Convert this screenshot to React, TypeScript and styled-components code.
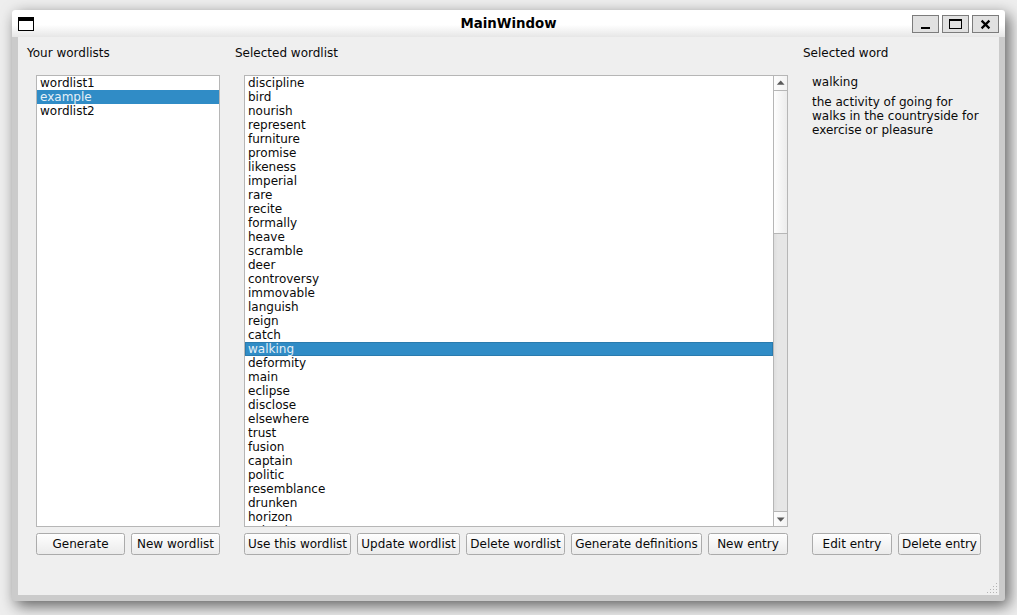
import React from "react";
import styled, { createGlobalStyle, css } from "styled-components";

const GlobalStyle = createGlobalStyle`
  * { box-sizing: border-box; }
  html, body { margin: 0; padding: 0; }
  body {
    width: 1017px;
    height: 615px;
    overflow: hidden;
    background: #eeeeee;
    font: 12px/14px "DejaVu Sans", sans-serif;
    color: #0a0a0a;
  }
`;

const Desktop = styled.div`
  width: 1017px;
  height: 615px;
  padding: 10px 12px 14px;
  overflow: hidden;
  background: #eeeeee;
`;

const Window = styled.div`
  width: 993px;
  height: 591px;
  display: flex;
  flex-direction: column;
  background: #cbcbcb;
  border-radius: 3px;
  box-shadow: 4px 5px 15px rgba(0, 0, 0, 0.6);
`;

const TitleBar = styled.header`
  height: 27px;
  flex: none;
  display: flex;
  align-items: center;
  padding: 1px 6px 0;
  border-radius: 3px 3px 0 0;
  background: linear-gradient(#ffffff 0%, #ffffff 55%, #e6e6e6 100%);
`;

const TitleSide = styled.div<{ $end?: boolean }>`
  width: 87px;
  display: flex;
  gap: 3px;
  justify-content: ${(p) => (p.$end ? "flex-end" : "flex-start")};
`;

const Title = styled.h1`
  flex: 1;
  margin: 0;
  text-align: center;
  font-size: 13.33px;
  line-height: 16px;
  font-weight: bold;
  color: #000;
`;

const CaptionButton = styled.button`
  width: 27px;
  height: 18px;
  padding: 0;
  border: 1px solid #7c7c7c;
  background: #e1e1e1;
  display: flex;
`;

const Glyph = styled.svg`
  display: block;
  flex: none;
`;

const Body = styled.main`
  flex: 1;
  margin: 0 6px 6px;
  padding: 9px 9px 0;
  background: #efefef;
  display: flex;
  flex-direction: column;
`;

const Columns = styled.div`
  display: grid;
  grid-template-columns: 202px 562px 187px;
  column-gap: 6px;
`;

const Panel = styled.section`
  display: flex;
  flex-direction: column;
`;

const PanelTitle = styled.h2`
  margin: 0 0 15px;
  font-size: 12px;
  line-height: 14px;
  font-weight: normal;
`;

const PanelBody = styled.div`
  height: 480px;
  margin: 0 9px;
  display: flex;
  flex-direction: column;
  gap: 6px;
`;

const ListBox = styled.div`
  height: 452px;
  flex: none;
  display: flex;
  border: 1px solid #b6b6b6;
  background: #fff;
  overflow: hidden;
`;

const Rows = styled.ul`
  flex: 1;
  margin: 0;
  padding: 0;
  list-style: none;
  overflow: hidden;
`;

const Row = styled.li<{ $selected?: boolean; $focused?: boolean }>`
  height: 14px;
  padding-left: 3px;
  white-space: nowrap;
  ${(p) =>
    p.$selected &&
    css`
      background: #308cc6;
      color: #e6f0f7;
    `}
  ${(p) =>
    p.$focused &&
    css`
      box-shadow: inset 0 0 0 1px #2a7bae;
    `}
`;

const ScrollBar = styled.div`
  width: 14px;
  flex: none;
  display: flex;
  flex-direction: column;
  border-left: 1px solid #b6b6b6;
  background: linear-gradient(90deg, #dedede, #e6e6e6 30%, #e6e6e6);
`;

const ScrollArrow = styled.div<{ $down?: boolean }>`
  height: 15px;
  flex: none;
  background: linear-gradient(90deg, #fdfdfd, #f3f3f3);
  border: 0 solid #b6b6b6;
  border-width: ${(p) => (p.$down ? "1px 0 0" : "0 0 1px")};
`;

const ScrollThumb = styled.div`
  height: 143px;
  flex: none;
  border-bottom: 1px solid #b6b6b6;
  background: linear-gradient(90deg, #fefefe, #ececec);
`;

const Track = styled.div`
  flex: 1;
`;

const ButtonRow = styled.div`
  display: flex;
  gap: 6px;
  margin-top: auto;
`;

const PushButton = styled.button<{ $w: number }>`
  width: ${(p) => p.$w}px;
  height: 22px;
  flex: none;
  padding: 0;
  border: 1px solid #ababab;
  border-radius: 2.5px;
  background: linear-gradient(#fefefe, #ebebeb);
  font: 12px/14px "DejaVu Sans", sans-serif;
  color: #0a0a0a;
  white-space: nowrap;
`;

const Word = styled.p`
  margin: 0 0 6px;
`;

const Definition = styled.p`
  margin: 0;
  white-space: pre-line;
`;

const GripLine = styled.div`
  margin: auto -8px 1px 0;
  display: flex;
  justify-content: flex-end;
`;

const wordlists = ["wordlist1", "example", "wordlist2"];

const words = [
  "discipline", "bird", "nourish", "represent", "furniture", "promise",
  "likeness", "imperial", "rare", "recite", "formally", "heave", "scramble",
  "deer", "controversy", "immovable", "languish", "reign", "catch", "walking",
  "deformity", "main", "eclipse", "disclose", "elsewhere", "trust", "fusion",
  "captain", "politic", "resemblance", "drunken", "horizon", "splendor",
];

const WindowIcon = () => (
  <Glyph width="16" height="14" shapeRendering="crispEdges">
    <rect width="16" height="14" fill="#000" />
    <rect x="1" y="4" width="14" height="9" fill="#fff" />
  </Glyph>
);

const MinimizeGlyph = () => (
  <Glyph width="25" height="16" shapeRendering="crispEdges">
    <rect x="8" y="11" width="9" height="2" />
  </Glyph>
);

const MaximizeGlyph = () => (
  <Glyph width="25" height="16" shapeRendering="crispEdges">
    <path fillRule="evenodd" d="M6 3h13v10H6zM7 5v7h11V5z" />
  </Glyph>
);

const CloseGlyph = () => (
  <Glyph width="25" height="16">
    <path d="M8.6 4.6l7.8 7.8M16.4 4.6l-7.8 7.8" stroke="#000" strokeWidth="2.2" />
  </Glyph>
);

const Arrow = ({ down }: { down?: boolean }) => (
  <Glyph width="13" height="14">
    <path d={down ? "M2.8 5.5h7.8l-3.9 4.3z" : "M2.8 8.8h7.8l-3.9-4.3z"} fill="#5a5a5a" />
  </Glyph>
);

const SizeGrip = () => (
  <Glyph width="11" height="11" shapeRendering="crispEdges" fill="#b4b4b4">
    {[0, 1, 2, 3].flatMap((r) =>
      Array.from({ length: r + 1 }, (_, i) => (
        <rect key={`${r}-${i}`} x={9 - i * 3} y={r * 3} width="1" height="1" />
      ))
    )}
  </Glyph>
);

export default function App() {
  return (
    <>
      <GlobalStyle />
      <Desktop>
        <Window>
          <TitleBar>
            <TitleSide><WindowIcon /></TitleSide>
            <Title>MainWindow</Title>
            <TitleSide $end>
              <CaptionButton aria-label="Minimize"><MinimizeGlyph /></CaptionButton>
              <CaptionButton aria-label="Maximize"><MaximizeGlyph /></CaptionButton>
              <CaptionButton aria-label="Close"><CloseGlyph /></CaptionButton>
            </TitleSide>
          </TitleBar>
          <Body>
            <Columns>
              <Panel>
                <PanelTitle>Your wordlists</PanelTitle>
                <PanelBody>
                  <ListBox>
                    <Rows>
                      {wordlists.map((w) => (
                        <Row key={w} $selected={w === "example"}>{w}</Row>
                      ))}
                    </Rows>
                  </ListBox>
                  <ButtonRow>
                    <PushButton $w={89}>Generate</PushButton>
                    <PushButton $w={89}>New wordlist</PushButton>
                  </ButtonRow>
                </PanelBody>
              </Panel>
              <Panel>
                <PanelTitle>Selected wordlist</PanelTitle>
                <PanelBody>
                  <ListBox>
                    <Rows>
                      {words.map((w) => (
                        <Row key={w} $selected={w === "walking"} $focused={w === "walking"}>{w}</Row>
                      ))}
                    </Rows>
                    <ScrollBar>
                      <ScrollArrow><Arrow /></ScrollArrow>
                      <ScrollThumb />
                      <Track />
                      <ScrollArrow $down><Arrow down /></ScrollArrow>
                    </ScrollBar>
                  </ListBox>
                  <ButtonRow>
                    <PushButton $w={107}>Use this wordlist</PushButton>
                    <PushButton $w={103}>Update wordlist</PushButton>
                    <PushButton $w={99}>Delete wordlist</PushButton>
                    <PushButton $w={131}>Generate definitions</PushButton>
                    <PushButton $w={80}>New entry</PushButton>
                  </ButtonRow>
                </PanelBody>
              </Panel>
              <Panel>
                <PanelTitle>Selected word</PanelTitle>
                <PanelBody>
                  <div>
                    <Word>walking</Word>
                    <Definition>{"the activity of going for\nwalks in the countryside for\nexercise or pleasure"}</Definition>
                  </div>
                  <ButtonRow>
                    <PushButton $w={80}>Edit entry</PushButton>
                    <PushButton $w={83}>Delete entry</PushButton>
                  </ButtonRow>
                </PanelBody>
              </Panel>
            </Columns>
            <GripLine><SizeGrip /></GripLine>
          </Body>
        </Window>
      </Desktop>
    </>
  );
}
